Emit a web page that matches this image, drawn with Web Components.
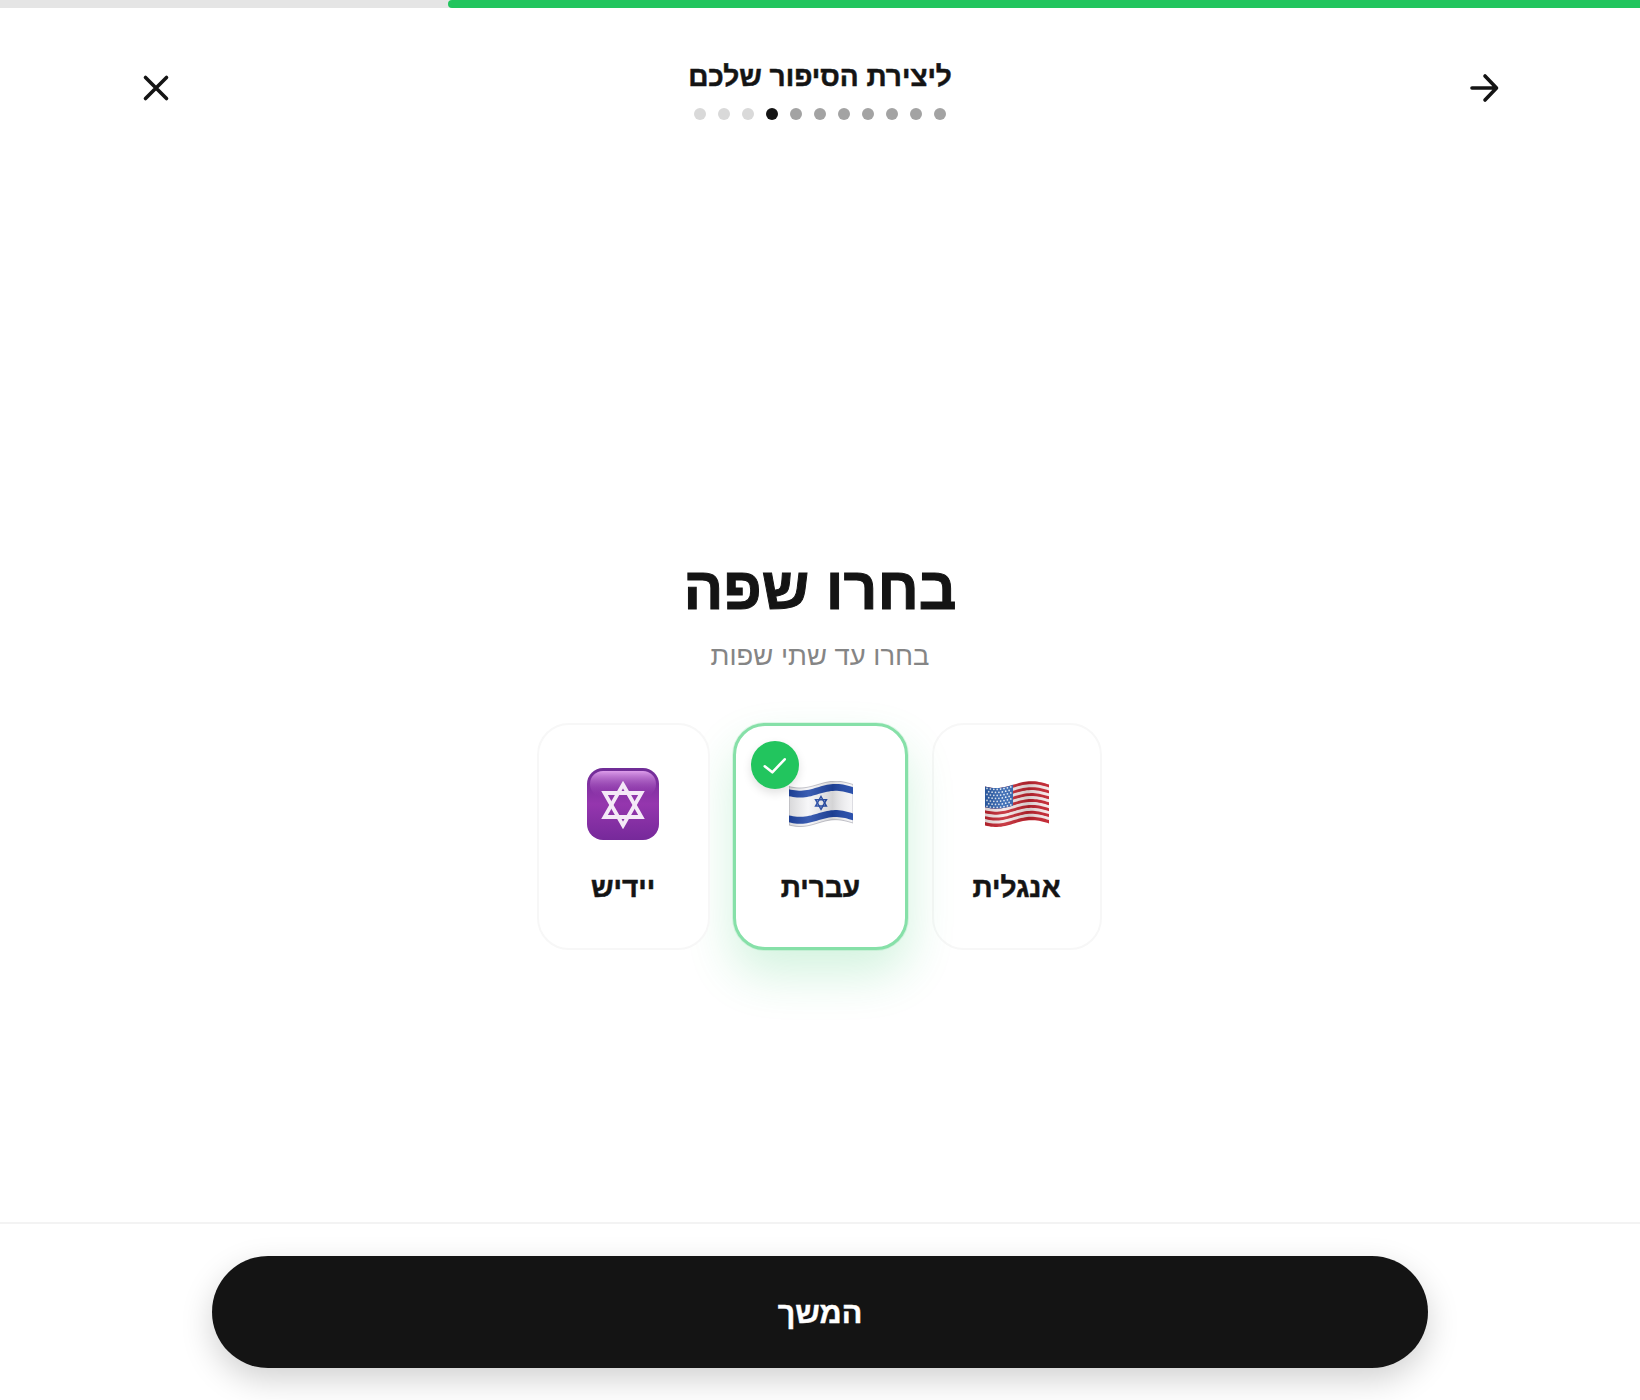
<!DOCTYPE html>
<html lang="he" dir="rtl">
<head>
<meta charset="utf-8">
<title>בחרו שפה</title>
<style>
    html, body { margin: 0; height: 100%; background: #fff; }
    body { font-family: "Liberation Sans", "DejaVu Sans", sans-serif; color: #141414; }
</style>
</head>
<body>
<story-page>
    <story-progress slot="progress" value="72.7"></story-progress>
    <story-header slot="header" heading="ליצירת הסיפור שלכם" steps="11" current="7"></story-header>
    <language-step heading="בחרו שפה" hint="בחרו עד שתי שפות">
        <language-card label="אנגלית" icon="us" width="170"></language-card>
        <language-card label="עברית" icon="il" width="175" selected></language-card>
        <language-card label="יידיש" icon="star" width="173"></language-card>
    </language-step>
    <story-footer slot="footer" label="המשך"></story-footer>
</story-page>

<script>
class storyPage extends HTMLElement {
    constructor() {
        super();
        this.attachShadow({ mode: 'open' });
        this.shadowRoot.innerHTML = `
        <style>
            :host {
                display: flex;
                flex-direction: column;
                height: 1400px;
                overflow: hidden;
            }
            main {
                flex: 1;
                display: flex;
                flex-direction: column;
                align-items: center;
                justify-content: flex-end;
                padding-bottom: 272px;
            }
        </style>
        <slot name="progress"></slot>
        <slot name="header"></slot>
        <main><slot></slot></main>
        <slot name="footer"></slot>
        `;
    }
}

class storyProgress extends HTMLElement {
    constructor() {
        super();
        this.attachShadow({ mode: 'open' });
        this.shadowRoot.innerHTML = `
        <style>
            :host {
                display: block;
                height: 8px;
                background: #e5e5e5;
            }
            .fill {
                height: 100%;
                background: #22c55e;
                border-radius: 4px 0 0 4px;
            }
        </style>
        <div class="fill"></div>
        `;
    }

    connectedCallback() {
        this.shadowRoot.querySelector('.fill').style.width = this.getAttribute('value') + '%';
    }
}

class storyHeader extends HTMLElement {
    constructor() {
        super();
        this.attachShadow({ mode: 'open' });
        this.shadowRoot.innerHTML = `
        <style>
            :host {
                display: flex;
                align-items: flex-start;
                justify-content: space-between;
                padding: 48px 124px 0;
                height: 88px;
            }
            button {
                width: 64px;
                height: 64px;
                padding: 0;
                border: 0;
                background: none;
                display: flex;
                align-items: center;
                justify-content: center;
            }
            svg {
                width: 40px;
                height: 40px;
                fill: none;
                stroke: #141414;
                stroke-width: 3.6;
                stroke-linecap: round;
                stroke-linejoin: round;
            }
            .center {
                display: flex;
                flex-direction: column;
                align-items: center;
                gap: 9px;
                padding-top: 3px;
            }
            .title {
                margin: 0;
                font-size: 28px;
                line-height: 36px;
                font-weight: 700;
                -webkit-text-stroke: .5px #141414;
                height: 40px;
            }
            .dots {
                display: flex;
                gap: 12px;
            }
            .dots i {
                width: 12px;
                height: 12px;
                border-radius: 50%;
                background: #a3a3a3;
            }
            .dots i.on { background: #141414; }
            .dots i.next { background: #d9d9d9; }
        </style>
        <button aria-label="back"><svg viewBox="0 0 40 40"><path d="M8 20H32M21 8L32.5 20L21 32"/></svg></button>
        <div class="center">
            <h2 class="title"></h2>
            <div class="dots"></div>
        </div>
        <button aria-label="close"><svg viewBox="0 0 40 40"><path d="M9.5 9.5L30.5 30.5M30.5 9.5L9.5 30.5"/></svg></button>
        `;
    }

    connectedCallback() {
        this.shadowRoot.querySelector('.title').textContent = this.getAttribute('heading');
        const steps = Number(this.getAttribute('steps'));
        const current = Number(this.getAttribute('current'));
        const dots = this.shadowRoot.querySelector('.dots');
        for (let i = 0; i < steps; i++) {
            const dot = document.createElement('i');
            if (i === current) dot.className = 'on';
            if (i > current) dot.className = 'next';
            dots.appendChild(dot);
        }
    }
}

class languageStep extends HTMLElement {
    constructor() {
        super();
        this.attachShadow({ mode: 'open' });
        this.shadowRoot.innerHTML = `
        <style>
            :host {
                display: flex;
                flex-direction: column;
                align-items: center;
            }
            h1 {
                margin: 0;
                font-size: 59px;
                line-height: 72px;
                font-weight: 700;
                -webkit-text-stroke: 1px #141414;
            }
            p {
                margin: 11px 0 0;
                font-size: 27.4px;
                line-height: 40px;
                color: #858585;
            }
            .cards {
                display: flex;
                gap: 23.5px;
                margin-top: 47px;
                padding-right: 2px;
            }
        </style>
        <h1></h1>
        <p></p>
        <div class="cards"><slot></slot></div>
        `;
    }

    connectedCallback() {
        this.shadowRoot.querySelector('h1').textContent = this.getAttribute('heading');
        this.shadowRoot.querySelector('p').textContent = this.getAttribute('hint');
    }
}

// y of a point on the waving cloth, x in 0-64, v is 0-1 down its height
function waveY(x, v) {
    return 3.6 + 3.4 * Math.sin((x / 64) * Math.PI * 1.8 + 0.6) + v * 38.5;
}

function waveBand(v0, v1, x0 = 0, x1 = 64) {
    const top = [];
    const bottom = [];
    for (let x = x0; x <= x1 + 0.01; x += 2) {
        top.push(x.toFixed(1) + ' ' + waveY(x, v0).toFixed(2));
        bottom.unshift(x.toFixed(1) + ' ' + waveY(x, v1).toFixed(2));
    }
    return 'M' + top.join('L') + 'L' + bottom.join('L') + 'Z';
}

const clothShade = `<stop offset="0" stop-color="#000" stop-opacity=".12"/><stop offset=".3" stop-color="#fff" stop-opacity=".12"/><stop offset=".68" stop-color="#000" stop-opacity=".14"/><stop offset="1" stop-color="#fff" stop-opacity=".05"/>`;

function usFlag() {
    let stripes = '';
    for (let i = 0; i < 13; i++) {
        const red = i % 2 === 0;
        stripes += `<path d="${waveBand(i / 13, (i + 1) / 13 + (red ? 0.012 : 0))}" fill="${red ? '#c2242f' : '#f6e8e8'}"/>`;
    }
    let stars = '';
    for (let r = 0; r < 7; r++) {
        for (let c = 0; c < (r % 2 ? 7 : 8); c++) {
            const x = 2 + c * 3.4 + (r % 2 ? 1.7 : 0);
            const y = waveY(x, 0) + 1.4 + r * 3;
            stars += `<circle cx="${x.toFixed(1)}" cy="${y.toFixed(1)}" r=".85" fill="#e6edf8"/>`;
        }
    }
    return `<svg viewBox="0 0 64 46" width="64" height="46">
        <defs><linearGradient id="shade">${clothShade}</linearGradient></defs>
        ${stripes}
        <path d="${waveBand(0, 7 / 13, 0, 28)}" fill="#2f62b0"/>
        ${stars}
        <path d="${waveBand(0, 1)}" fill="url(#shade)"/>
    </svg>`;
}

function ilFlag() {
    const c = waveY(32, 0.5);
    return `<svg viewBox="0 0 64 46" width="64" height="46">
        <defs><linearGradient id="fold">${clothShade}</linearGradient></defs>
        <path d="${waveBand(0, 1)}" fill="#f6f6f8" stroke="#b4b4bc" stroke-width=".8"/>
        <path d="${waveBand(0.07, 0.25)}" fill="#2148a8"/>
        <path d="${waveBand(0.75, 0.93)}" fill="#2148a8"/>
        <g fill="none" stroke="#2148a8" stroke-width="1.5">
            <path d="M32 ${(c - 6.4).toFixed(1)}L37.4 ${(c + 3.2).toFixed(1)}H26.6Z"/>
            <path d="M32 ${(c + 6.4).toFixed(1)}L37.4 ${(c - 3.2).toFixed(1)}H26.6Z"/>
        </g>
        <path d="${waveBand(0, 1)}" fill="url(#fold)"/>
    </svg>`;
}

function starTile() {
    return `<svg viewBox="0 0 72 72" width="72" height="72">
        <defs>
            <linearGradient id="tile" x1="0" y1="0" x2="0" y2="1"><stop offset="0" stop-color="#6f2c96"/><stop offset=".5" stop-color="#9536ae"/><stop offset="1" stop-color="#76299a"/></linearGradient>
            <linearGradient id="gloss" x1="0" y1="0" x2="0" y2="1"><stop offset="0" stop-color="#dc9cea"/><stop offset="1" stop-color="#9536ae" stop-opacity="0"/></linearGradient>
        </defs>
        <rect width="72" height="72" rx="16" fill="url(#tile)"/>
        <rect x="3" y="3" width="66" height="26" rx="13" fill="url(#gloss)"/>
        <g fill="none" stroke="#f4e9f7" stroke-width="3.8">
            <path d="M36 16.5L54.5 49H17.5Z"/>
            <path d="M36 57.5L54.5 25H17.5Z"/>
        </g>
    </svg>`;
}

const languageIcons = { us: usFlag, il: ilFlag, star: starTile };

class languageCard extends HTMLElement {
    constructor() {
        super();
        this.attachShadow({ mode: 'open' });
        this.shadowRoot.innerHTML = `
        <style>
            :host {
                display: block;
                position: relative;
                box-sizing: border-box;
                height: 227px;
                border: 2px solid #f7f7f7;
                border-radius: 32px;
                background: #fff;
            }
            :host([selected]) {
                border: 3px solid #86e0a8;
                box-shadow: 0 0 0 1px rgba(34, 197, 94, .12), 0 24px 48px rgba(34, 197, 94, .2);
            }
            .body {
                display: flex;
                flex-direction: column;
                align-items: center;
                padding-top: 43px;
            }
            :host([selected]) .body { padding-top: 42px; }
            .icon {
                height: 72px;
                display: flex;
                align-items: center;
                justify-content: center;
            }
            .label {
                margin-top: 30px;
                font-size: 28px;
                line-height: 36px;
                font-weight: 700;
                -webkit-text-stroke: .5px #141414;
            }
            .check {
                display: none;
                position: absolute;
                top: 15px;
                left: 15px;
                width: 48px;
                height: 48px;
                border-radius: 50%;
                background: #22c55e;
                box-shadow: 0 4px 10px rgba(0, 0, 0, .12);
                align-items: center;
                justify-content: center;
            }
            :host([selected]) .check { display: flex; }
            .check svg {
                width: 28px;
                height: 28px;
                fill: none;
                stroke: #fff;
                stroke-width: 2.6;
                stroke-linecap: round;
                stroke-linejoin: round;
            }
        </style>
        <div class="body">
            <div class="icon"></div>
            <div class="label"></div>
        </div>
        <div class="check"><svg viewBox="0 0 28 28"><path d="M3.7 15.3L11.3 21.3L23.7 8.3"/></svg></div>
        `;
    }

    connectedCallback() {
        this.style.width = this.getAttribute('width') + 'px';
        this.shadowRoot.querySelector('.label').textContent = this.getAttribute('label');
        this.shadowRoot.querySelector('.icon').innerHTML = languageIcons[this.getAttribute('icon')]();
    }
}

class storyFooter extends HTMLElement {
    constructor() {
        super();
        this.attachShadow({ mode: 'open' });
        this.shadowRoot.innerHTML = `
        <style>
            :host {
                display: block;
                border-top: 2px solid #f3f3f3;
                padding: 32px 212px;
            }
            button {
                display: block;
                width: 100%;
                height: 112px;
                padding: 0;
                border: 0;
                border-radius: 56px;
                background: #141414;
                color: #fff;
                font: 700 30.5px "Liberation Sans", sans-serif;
                -webkit-text-stroke: .4px #fff;
                box-shadow: 0 12px 32px rgba(0, 0, 0, .18);
            }
        </style>
        <button></button>
        `;
    }

    connectedCallback() {
        this.shadowRoot.querySelector('button').textContent = this.getAttribute('label');
    }
}

window.customElements.define('story-page', storyPage);
window.customElements.define('story-progress', storyProgress);
window.customElements.define('story-header', storyHeader);
window.customElements.define('language-step', languageStep);
window.customElements.define('language-card', languageCard);
window.customElements.define('story-footer', storyFooter);
</script>
</body>
</html>
